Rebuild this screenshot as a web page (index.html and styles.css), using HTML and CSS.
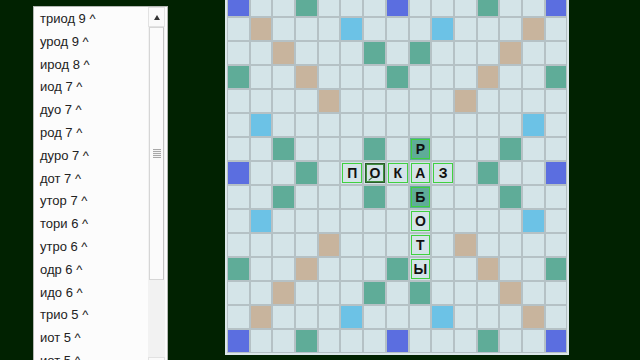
FILE: index.html
```html
<!DOCTYPE html>
<html lang="ru">
<head>
<meta charset="utf-8">
<title>Эрудит</title>
<link rel="stylesheet" href="styles.css">
</head>
<body>
<div class="app">
  <div class="list">
    <div class="items">
      <div class="item">триод 9 ^</div>
      <div class="item">урод 9 ^</div>
      <div class="item">ирод 8 ^</div>
      <div class="item">иод 7 ^</div>
      <div class="item">дуо 7 ^</div>
      <div class="item">род 7 ^</div>
      <div class="item">дуро 7 ^</div>
      <div class="item">дот 7 ^</div>
      <div class="item">утор 7 ^</div>
      <div class="item">тори 6 ^</div>
      <div class="item">утро 6 ^</div>
      <div class="item">одр 6 ^</div>
      <div class="item">идо 6 ^</div>
      <div class="item">трио 5 ^</div>
      <div class="item">иот 5 ^</div>
      <div class="item">иот 5 ^</div>
    </div>
    <div class="scroll">
      <div class="sbtn"><span class="up"></span></div>
      <div class="track"><div class="thumb"><span class="grip"></span></div></div>
      <div class="sbtn"><span class="down"></span></div>
    </div>
  </div>

  <div class="board">
    <div class="grid">
      <div class="tw"></div><div class="n"></div><div class="n"></div><div class="dl"></div><div class="n"></div><div class="n"></div><div class="n"></div><div class="tw"></div><div class="n"></div><div class="n"></div><div class="n"></div><div class="dl"></div><div class="n"></div><div class="n"></div><div class="tw"></div>
      <div class="n"></div><div class="dw"></div><div class="n"></div><div class="n"></div><div class="n"></div><div class="tl"></div><div class="n"></div><div class="n"></div><div class="n"></div><div class="tl"></div><div class="n"></div><div class="n"></div><div class="n"></div><div class="dw"></div><div class="n"></div>
      <div class="n"></div><div class="n"></div><div class="dw"></div><div class="n"></div><div class="n"></div><div class="n"></div><div class="dl"></div><div class="n"></div><div class="dl"></div><div class="n"></div><div class="n"></div><div class="n"></div><div class="dw"></div><div class="n"></div><div class="n"></div>
      <div class="dl"></div><div class="n"></div><div class="n"></div><div class="dw"></div><div class="n"></div><div class="n"></div><div class="n"></div><div class="dl"></div><div class="n"></div><div class="n"></div><div class="n"></div><div class="dw"></div><div class="n"></div><div class="n"></div><div class="dl"></div>
      <div class="n"></div><div class="n"></div><div class="n"></div><div class="n"></div><div class="dw"></div><div class="n"></div><div class="n"></div><div class="n"></div><div class="n"></div><div class="n"></div><div class="dw"></div><div class="n"></div><div class="n"></div><div class="n"></div><div class="n"></div>
      <div class="n"></div><div class="tl"></div><div class="n"></div><div class="n"></div><div class="n"></div><div class="n"></div><div class="n"></div><div class="n"></div><div class="n"></div><div class="n"></div><div class="n"></div><div class="n"></div><div class="n"></div><div class="tl"></div><div class="n"></div>
      <div class="n"></div><div class="n"></div><div class="dl"></div><div class="n"></div><div class="n"></div><div class="n"></div><div class="dl"></div><div class="n"></div><div class="dl"><span class="tile">Р</span></div><div class="n"></div><div class="n"></div><div class="n"></div><div class="dl"></div><div class="n"></div><div class="n"></div>
      <div class="tw"></div><div class="n"></div><div class="n"></div><div class="dl"></div><div class="n"></div><div class="n"><span class="tile">П</span></div><div class="n"><span class="tile sel">О<i class="caret"></i></span></div><div class="n"><span class="tile">К</span></div><div class="n"><span class="tile">А</span></div><div class="n"><span class="tile">З</span></div><div class="n"></div><div class="dl"></div><div class="n"></div><div class="n"></div><div class="tw"></div>
      <div class="n"></div><div class="n"></div><div class="dl"></div><div class="n"></div><div class="n"></div><div class="n"></div><div class="dl"></div><div class="n"></div><div class="dl"><span class="tile">Б</span></div><div class="n"></div><div class="n"></div><div class="n"></div><div class="dl"></div><div class="n"></div><div class="n"></div>
      <div class="n"></div><div class="tl"></div><div class="n"></div><div class="n"></div><div class="n"></div><div class="n"></div><div class="n"></div><div class="n"></div><div class="n"><span class="tile">О</span></div><div class="n"></div><div class="n"></div><div class="n"></div><div class="n"></div><div class="tl"></div><div class="n"></div>
      <div class="n"></div><div class="n"></div><div class="n"></div><div class="n"></div><div class="dw"></div><div class="n"></div><div class="n"></div><div class="n"></div><div class="n"><span class="tile">Т</span></div><div class="n"></div><div class="dw"></div><div class="n"></div><div class="n"></div><div class="n"></div><div class="n"></div>
      <div class="dl"></div><div class="n"></div><div class="n"></div><div class="dw"></div><div class="n"></div><div class="n"></div><div class="n"></div><div class="dl"></div><div class="n"><span class="tile">Ы</span></div><div class="n"></div><div class="n"></div><div class="dw"></div><div class="n"></div><div class="n"></div><div class="dl"></div>
      <div class="n"></div><div class="n"></div><div class="dw"></div><div class="n"></div><div class="n"></div><div class="n"></div><div class="dl"></div><div class="n"></div><div class="dl"></div><div class="n"></div><div class="n"></div><div class="n"></div><div class="dw"></div><div class="n"></div><div class="n"></div>
      <div class="n"></div><div class="dw"></div><div class="n"></div><div class="n"></div><div class="n"></div><div class="tl"></div><div class="n"></div><div class="n"></div><div class="n"></div><div class="tl"></div><div class="n"></div><div class="n"></div><div class="n"></div><div class="dw"></div><div class="n"></div>
      <div class="tw"></div><div class="n"></div><div class="n"></div><div class="dl"></div><div class="n"></div><div class="n"></div><div class="n"></div><div class="tw"></div><div class="n"></div><div class="n"></div><div class="n"></div><div class="dl"></div><div class="n"></div><div class="n"></div><div class="tw"></div>
    </div>
  </div>
</div>
</body>
</html>
```

FILE: styles.css
```css
html, body {
  margin: 0;
  padding: 0;
}
body {
  width: 640px;
  height: 360px;
  overflow: hidden;
  background: #012201;
  font-family: "Liberation Sans", Arial, sans-serif;
}
.app {
  display: flex;
  align-items: flex-start;
  padding-left: 33px;
  gap: 57px;
}

/* word list */
.list {
  margin-top: 6px;
  width: 135px;
  height: 372px;
  box-sizing: border-box;
  border: 1px solid #b4b8b4;
  background: #fcfcfc;
  display: flex;
}
.items {
  flex: 1;
  padding: 1px 0 0 6px;
}
.item {
  height: 22.8px;
  line-height: 22.8px;
  font-size: 13px;
  color: #222;
  white-space: nowrap;
}
.scroll {
  width: 17px;
  margin-right: 2px;
  display: flex;
  flex-direction: column;
  background: #eeeeee;
}
.sbtn {
  height: 20px;
  box-sizing: border-box;
  border: 1px solid #e2e2e2;
  background: #fafafa;
  display: flex;
  align-items: center;
  justify-content: center;
}
.up {
  width: 0;
  height: 0;
  border-left: 3.5px solid transparent;
  border-right: 3.5px solid transparent;
  border-bottom: 5px solid #333;
}
.down {
  width: 0;
  height: 0;
  border-left: 3.5px solid transparent;
  border-right: 3.5px solid transparent;
  border-top: 5px solid #333;
}
.track {
  flex: 1;
  padding: 0 1px;
  background: #f2f2f2;
}
.thumb {
  height: 253px;
  box-sizing: border-box;
  border: 1px solid #d6d6d6;
  border-right-color: #c4c4c4;
  background: #fbfbfb;
  display: flex;
  align-items: center;
  justify-content: center;
}
.grip {
  width: 8px;
  height: 9px;
  background: repeating-linear-gradient(#a8a8a8 0 1px, #f4f4f4 1px 2px);
}

/* board */
.board {
  margin-top: -9px;
  border: 2px solid #dbe7ea;
  background: #b5c1c5;
  padding: 1px;
}
.grid {
  display: grid;
  grid-template-columns: repeat(15, 20.7px);
  grid-auto-rows: 22px;
  gap: 2px;
}
.n, .tw, .dw, .tl, .dl {
  display: flex;
  align-items: stretch;
  justify-content: stretch;
}
.n { background: #d4e4e8; }
.tw { background: #5b6ee0; }
.dw { background: #c8b49d; }
.tl { background: #6cc2e6; }
.dl { background: #5fac98; }

.tile {
  position: relative;
  flex: 1;
  margin: 1px 0 1px 1px;
  border: 1px solid #40d040;
  display: flex;
  align-items: center;
  justify-content: center;
  font-weight: bold;
  font-size: 14px;
  color: #111;
}
.tile.sel {
  border-color: #2c5a2c;
  box-shadow: inset 0 0 0 1px #3f8f3f;
}
.caret {
  position: absolute;
  left: 2px;
  bottom: 3px;
  width: 6px;
  height: 1px;
  background: #2c5a2c;
  transform: rotate(-40deg);
}
```
